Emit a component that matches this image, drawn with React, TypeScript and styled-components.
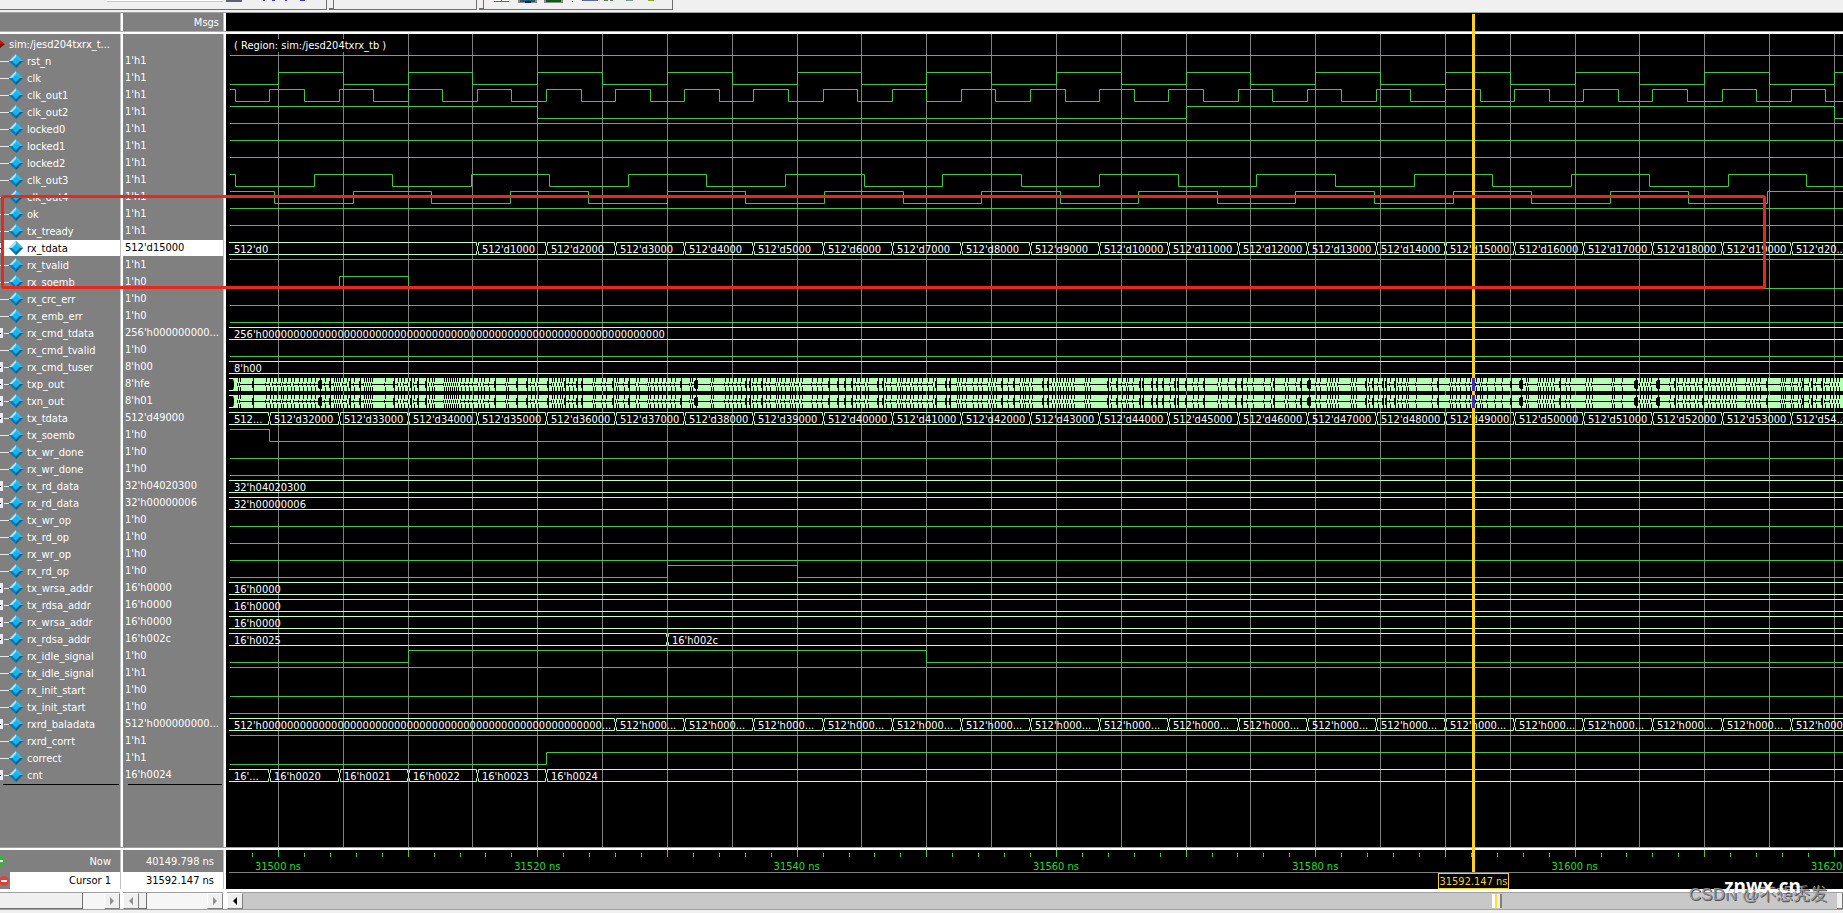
import React from "react";
import styled, { createGlobalStyle } from "styled-components";

const GlobalStyle = createGlobalStyle`
  * { box-sizing: border-box; }
  body { margin: 0; background: #f0f0f0; }
  body, button, text { font-family: "DejaVu Sans Condensed", Tahoma, "Noto Sans", sans-serif; font-size: 11px; }
`;

/* ---------- data ---------- */

const NS = 12966 / 1000; // horizontal pixels per nanosecond
const GRID = NS * 5;
const GRID_START = 52;
const BEAT = NS * (16 / 3);
const BEAT_START = 43.4;
const END = 2600;
const PITCH = 17;

type Wave =
  | { kind: "bit"; start: 0 | 1; edges?: number[] }
  | { kind: "bus"; values: string[]; edges?: number[] }
  | { kind: "dense" };

interface Signal { name: string; value: string; wave: Wave; selected?: boolean }

const high: Wave = { kind: "bit", start: 1 };
const low: Wave = { kind: "bit", start: 0 };
const bit = (start: 0 | 1, edges: number[]): Wave => ({ kind: "bit", start, edges });
const bus = (values: string[], edges: number[] = []): Wave => ({ kind: "bus", values, edges });
const every = (from: number, step: number) => {
  const out: number[] = [];
  for (let x = from; x < END; x += step) out.push(x);
  return out;
};
const beat = (n: number) => BEAT_START + n * BEAT;
const beats = (from: number, n: number) => Array.from({ length: n }, (_, i) => beat(from + i));
const count = (from: number, n: number) =>
  Array.from({ length: n }, (_, i) => `512'd${from + i * 1000}`);

const signals: Signal[] = [
  { name: "rst_n", value: "1'h1", wave: high },
  { name: "clk", value: "1'h1", wave: bit(0, every(GRID_START, GRID)) },
  { name: "clk_out1", value: "1'h1", wave: bit(1, every(BEAT_START - BEAT / 2, BEAT / 2)) },
  { name: "clk_out2", value: "1'h1", wave: bit(1, every(GRID_START + GRID * 4, GRID * 10)) },
  { name: "locked0", value: "1'h1", wave: high },
  { name: "locked1", value: "1'h1", wave: high },
  { name: "locked2", value: "1'h1", wave: high },
  { name: "clk_out3", value: "1'h1", wave: bit(1, every(9, 78.57)) },
  { name: "clk_out4", value: "1'h1", wave: bit(1, every(48, 78.57)) },
  { name: "ok", value: "1'h1", wave: high },
  { name: "tx_tready", value: "1'h1", wave: high },
  { name: "rx_tdata", value: "512'd15000", selected: true, wave: bus(["512'd0", ...count(1000, 19), "512'd20..."], beats(3, 20)) },
  { name: "rx_tvalid", value: "1'h1", wave: high },
  { name: "rx_soemb", value: "1'h0", wave: bit(0, [beat(1), beat(2)]) },
  { name: "rx_crc_err", value: "1'h0", wave: low },
  { name: "rx_emb_err", value: "1'h0", wave: low },
  { name: "rx_cmd_tdata", value: "256'h000000000...", wave: bus(["256'h" + "0".repeat(64)]) },
  { name: "rx_cmd_tvalid", value: "1'h0", wave: low },
  { name: "rx_cmd_tuser", value: "8'h00", wave: bus(["8'h00"]) },
  { name: "txp_out", value: "8'hfe", wave: { kind: "dense" } },
  { name: "txn_out", value: "8'h01", wave: { kind: "dense" } },
  { name: "tx_tdata", value: "512'd49000", wave: bus(["512...", ...count(32000, 22), "512'd54..."], beats(0, 23)) },
  { name: "tx_soemb", value: "1'h0", wave: bit(1, [beat(0)]) },
  { name: "tx_wr_done", value: "1'h0", wave: low },
  { name: "rx_wr_done", value: "1'h0", wave: low },
  { name: "tx_rd_data", value: "32'h04020300", wave: bus(["32'h04020300"]) },
  { name: "rx_rd_data", value: "32'h00000006", wave: bus(["32'h00000006"]) },
  { name: "tx_wr_op", value: "1'h0", wave: low },
  { name: "tx_rd_op", value: "1'h0", wave: low },
  { name: "rx_wr_op", value: "1'h0", wave: low },
  { name: "rx_rd_op", value: "1'h0", wave: bit(0, [GRID_START + GRID * 6, GRID_START + GRID * 8]) },
  { name: "tx_wrsa_addr", value: "16'h0000", wave: bus(["16'h0000"]) },
  { name: "tx_rdsa_addr", value: "16'h0000", wave: bus(["16'h0000"]) },
  { name: "rx_wrsa_addr", value: "16'h0000", wave: bus(["16'h0000"]) },
  { name: "rx_rdsa_addr", value: "16'h002c", wave: bus(["16'h0025", "16'h002c"], [GRID_START + GRID * 6]) },
  { name: "rx_idle_signal", value: "1'h0", wave: bit(0, [GRID_START + GRID * 2, GRID_START + GRID * 10]) },
  { name: "tx_idle_signal", value: "1'h1", wave: high },
  { name: "rx_init_start", value: "1'h0", wave: low },
  { name: "tx_init_start", value: "1'h0", wave: low },
  { name: "rxrd_baladata", value: "512'h000000000...", wave: bus(["512'h" + "0".repeat(54) + "...", ...Array(18).fill("512'h000...")], beats(5, 18)) },
  { name: "rxrd_corrt", value: "1'h1", wave: high },
  { name: "correct", value: "1'h1", wave: bit(0, [beat(4)]) },
  { name: "cnt", value: "16'h0024", wave: bus(["16'...", "16'h0020", "16'h0021", "16'h0022", "16'h0023", "16'h0024"], beats(0, 5)) },
];

/* Serial line transitions in thirds of a pixel: narrow, wide ("b") and very wide ("B"). */
const denseParts: [number, string][] = [
  [2, "30 36 75b 115 127 136 148 160 166 178 190 200 213 225 237 250 262 278B 292 308b 318 324 330 336 345 357 366b 380 398b 408 414 420 426 432 472 500b 510 520 530 541 550b 560 572b 595b 605 612 618 650 656 662 668 674 680 686 692 700 712 724 735 750 760 770 785 801b 835 840 868b 898b 910 922 930 962b 972 980 988 996 1004 1012b 1024 1036 1048b 1062b 1095 1101 1123 1135 1156b 1165 1172 1190 1204b 1225 1235 1260 1266 1280 1290 1302 1315 1330 1342 1360b 1388 1394 1406B 1450 1456 1492 1504 1516 1528 1540"],
  [514, "18b 30b 40 52 66b 80 92 108 114 125 135 150 158 166 178 186 218 232 248 268b 295b 315b 338b 350 360 375 385 415b 430b 438 455 472 480 488 498 510 520 535 548 565 580 590b 620b 632b 652 658 668 678 700 716 728 745 753 761 769 786b 805 822b 842 850 856 868 878 910b 925b 938 946 954 962 970 978 986 994 1002 1035 1042 1050 1105b 1115 1132b 1148 1158 1166 1180 1200b 1210b 1237b 1252b 1270b 1290 1305b 1315b 1340b 1360 1375 1392b 1435 1445 1465 1490b 1508b 1522"],
  [1024, "10 42 65 72b 106 116 138 154b 178B 200 210 232 240 248 256 266 305 311 318 348b 358 370b 385 400b 410b 422 436b 445 456 470 476 500 548 564b 602 608 618 632 650 662 680 690 698 712 735 758 785b 815B 830 836 865 872 880 888 896 904 912 930b 950 960 1008 1018 1028 1088 1094 1118 1158B 1172 1180 1188 1196 1204 1224B 1262 1275b 1285 1300 1310 1320 1335 1345 1360b 1375 1383 1400 1410 1420 1430 1440 1450 1460 1490 1500 1510 1520 1530 1552b"],
  [1157, "1195 1201 1207 1225 1232 1245 1255 1262b 1280 1288b 1300 1318b 1328 1342 1352 1360 1370"],
];
const denseEdges = denseParts
  .flatMap(([base, list]) => list.split(" ").map((t) => ({
    x: base + Math.floor(parseInt(t, 10) / 3),
    size: t.endsWith("B") ? 2 : t.endsWith("b") ? 1 : 0,
  })))
  .sort((a, b) => a.x - b.x);

/* ---------- page parts ---------- */

const Page = styled.div`
  display: flex;
  flex-direction: column;
  min-height: 100vh;
  position: relative;
  overflow: hidden;
`;

const ToolbarRow = styled.div`
  display: flex;
  height: 13px;
  background: #f0f0f0;
  border-bottom: 1px solid #a0a0a0;
`;

const ToolGroup = styled.div<{ $width: number; $grip?: boolean }>`
  display: flex;
  justify-content: flex-end;
  gap: 8px;
  position: relative;
  width: ${(p) => p.$width}px;
  height: 10px;
  margin-right: 2px;
  border-right: 1px solid #6e6e6e;
  border-bottom: 1px solid #6e6e6e;
  ${(p) => p.$grip && `
    justify-content: flex-start;
    &::before {
      content: "";
      width: 4px;
      height: 8px;
      border-right: 1px solid #6e6e6e;
      border-bottom: 1px solid #6e6e6e;
    }
  `}
`;

const SearchField = styled.input`
  width: 116px;
  height: 2px;
  margin-right: -5px;
  padding: 0;
  border: 0;
  border-bottom: 1px solid #c8c8c8;
  background: #fff;
`;

const DarkButton = styled.button`
  width: 16px;
  height: 2px;
  padding: 0;
  border: 0;
  background: #606070;
`;

const ToolIcons = styled.svg`
  display: block;
  width: 182px;
  height: 4px;
`;

const Workspace = styled.div`
  display: flex;
  flex: 1;
  min-height: 0;
`;

const SignalPane = styled.div`
  display: flex;
  flex-direction: column;
  flex: none;
  width: 226px;
  color: #fff;
`;

const SignalTable = styled.table`
  display: flex;
  flex-direction: column;
  flex: 1;
  background: linear-gradient(to right,
    #808080 120px, #c0c0c0 120px 121px, #fff 121px 123px,
    #808080 123px 223px, #c0c0c0 223px 224px, #fff 224px);
`;

const HeadGroup = styled.thead`
  display: block;
  height: 21px;
  border-bottom: 2px solid #fff;
  box-shadow: inset 0 -1px #b0b0b0;
`;

const BodyGroup = styled.tbody`
  display: block;
  flex: 1;
  padding-top: 2px;
`;

const FootGroup = styled.tfoot`
  display: block;
  height: 44px;
  border-top: 2px solid #fff;
  border-bottom: 3px solid #fff;
  box-shadow: 0 -1px #a0a0a0;
`;

const Row = styled.tr<{ $height?: number }>`
  display: grid;
  grid-template-columns: 120px 100px;
  column-gap: 3px;
  height: ${(p) => p.$height ?? PITCH}px;
`;

const NameCell = styled.th<{ $selected?: boolean }>`
  display: flex;
  align-items: center;
  height: ${PITCH - 1}px;
  padding: 0;
  font-weight: 400;
  white-space: nowrap;
  ${(p) => p.$selected && "background: linear-gradient(to right, #808080 4px, #fff 4px); color: #000;"}
`;

const ValueCell = styled.td<{ $selected?: boolean }>`
  height: ${PITCH - 1}px;
  padding: 0 0 0 2px;
  line-height: 15px;
  white-space: nowrap;
  overflow: hidden;
  ${(p) => p.$selected && "background: #fff; color: #000;"}
`;

const HeaderCell = styled.th`
  padding: 0 4px 0 0;
  font-weight: 400;
  line-height: 20px;
  text-align: right;
`;

const EndRule = styled.div`
  display: grid;
  grid-template-columns: 116px 94px;
  column-gap: 9px;
  height: 1px;
  margin-top: -3px;
  background: none;
  span { background: #000; }
`;

const TreeSlot = styled.span`
  display: flex;
  align-items: center;
  flex: none;
  width: 27px;
`;

const FootLabel = styled.th<{ $light?: boolean }>`
  display: flex;
  align-items: center;
  justify-content: space-between;
  padding: 0 9px 0 0;
  font-weight: 400;
  ${(p) => p.$light && "background: linear-gradient(to right, #808080 10px, #fff 10px); color: #000;"}
`;

const FootValue = styled.td<{ $light?: boolean }>`
  display: flex;
  align-items: center;
  justify-content: flex-end;
  padding: 0 9px 0 0;
  ${(p) => p.$light && "background: #fff; color: #000;"}
`;

const IconButton = styled.button`
  display: block;
  width: 10px;
  height: 14px;
  padding: 0;
  border: 0;
  background: none;
  svg { display: block; }
`;

const ExpandButton = styled.button`
  width: 3px;
  height: 10px;
  padding: 0;
  border: 0;
  background: linear-gradient(to right, #222 1px, transparent 1px) 0 5px / 3px 1px no-repeat, #ececf8;
`;

const Branch = styled.span<{ $short?: boolean }>`
  width: ${(p) => (p.$short ? 5 : 9)}px;
  margin-left: ${(p) => (p.$short ? 1 : 0)}px;
  height: 1px;
  background: #e8e8e8;
`;

const WavePane = styled.div`
  display: flex;
  flex-direction: column;
  flex: 1;
  min-width: 0;
  position: relative;
  background: #000;
`;

const WaveHeader = styled.div`
  height: 21px;
  border-bottom: 2px solid #fff;
  box-shadow: inset 0 -1px #b0b0b0;
`;

const WaveCanvas = styled.svg`
  display: block;
  flex: 1;
  width: 100%;
  min-height: 0;
  height: 0;
  text { white-space: pre; }
`;

const RulerBox = styled.div`
  height: 44px;
  border-top: 2px solid #fff;
  border-bottom: 3px solid #fff;
  box-shadow: 0 -1px #a0a0a0;
`;

const Ruler = styled.svg`
  display: block;
  width: 100%;
  height: 39px;
`;

const CursorLine = styled.div`
  position: absolute;
  left: 1246px;
  top: 1px;
  bottom: 20px;
  width: 3px;
  background: #ffd21e;
`;

const CursorTag = styled.div`
  position: absolute;
  left: 1212px;
  bottom: 3px;
  width: 71px;
  height: 16px;
  border: 1px solid #f0d030;
  background: #000;
  color: #f0d030;
  line-height: 15px;
  text-align: center;
  white-space: nowrap;
`;

const ScrollRow = styled.div`
  display: grid;
  grid-template-columns: 120px 100px 1fr;
  column-gap: 3px;
  height: 21px;
  padding-bottom: 4px;
  background: linear-gradient(#fff 17px, #a0a0a0 17px 18px, #f0f0f0 18px);
`;

const ScrollTrack = styled.div<{ $solid?: boolean }>`
  display: flex;
  min-width: 0;
  border-top: 1px solid #a0a0a0;
  margin-left: ${(p) => (p.$solid ? 1 : 0)}px;
  background: ${(p) => (p.$solid ? "#c8c8c8" : "#f6f6f6")};
`;

const Thumb = styled.div<{ $width: number }>`
  width: ${(p) => p.$width}px;
  border-right: 1px solid #707070;
  border-bottom: 1px solid #707070;
  background: #f0f0f0;
`;

const MarkThumb = styled.div`
  width: 10px;
  margin: 1px auto 1px 1249px;
  border-right: 2px solid #808080;
  background: linear-gradient(to right, #fff 3px, #ffe030 3px 5px, #f0f0f0 5px);
`;

const Spacer = styled.div`
  flex: 1;
`;

const ArrowButton = styled.button`
  flex: none;
  width: 16px;
  padding: 0;
  border: 1px solid #fff;
  border-right-color: #808080;
  border-bottom-color: #808080;
  background: #f0f0f0;
  svg { display: block; margin: auto; }
`;

const Highlight = styled.div`
  position: absolute;
  left: 1px;
  top: 195px;
  width: 1765px;
  height: 94px;
  border: 3px solid #e8281e;
  border-radius: 3px;
  pointer-events: none;
`;

const Watermark = styled.div`
  position: absolute;
  right: 16px;
  bottom: 6px;
  color: rgba(150, 150, 150, 0.95);
  font: 17px/24px "Liberation Sans", "Noto Sans CJK SC", sans-serif;
  text-shadow: 1px 1px #555;
  white-space: nowrap;
`;

const SiteMark = styled.div`
  position: absolute;
  right: 42px;
  bottom: 15px;
  color: #fff;
  font: 700 19px/24px "Open Sans", sans-serif;
`;

/* ---------- drawings ---------- */

const Diamond = () => (
  <svg width="14" height="14" viewBox="0 0 14 14" aria-hidden="true">
    <path d="M7 0 14 7 7 14 0 7Z" fill="#0b9ad6" />
    <path d="M7 0 7 4 4 7 0 7Z" fill="#a8e6fa" />
    <path d="M7 0 14 7 10 7 7 4Z" fill="#36b8ea" />
    <path d="M14 7 7 14 7 10 10 7Z" fill="#0a5f8c" />
    <path d="M0 7 4 7 7 10 7 14Z" fill="#0878ac" />
    <path d="M7 3 11 7 7 11 3 7Z" fill="#12b4f2" />
  </svg>
);

const RegionMark = () => (
  <svg width="9" height="10" viewBox="0 0 9 10" aria-hidden="true">
    <path d="M0 1 5 5 0 9Z" fill="#d01010" />
    <path d="M0 5 5 5 0 9Z" fill="#8c0808" />
  </svg>
);

const Arrow = ({ right, color = "#909090" }: { right?: boolean; color?: string }) => (
  <svg width="6" height="8" viewBox="0 0 6 8" aria-hidden="true">
    <path d={right ? "M1 0 5 4 1 8Z" : "M5 0 1 4 5 8Z"} fill={color} />
  </svg>
);

const top = (row: number) => 21 + row * PITCH;

function BitWave({ row, start, edges = [] }: { row: number; start: 0 | 1; edges?: number[] }) {
  const level = (v: number) => top(row) + (v ? 0 : 12) + 0.5;
  let v: number = start;
  let d = `M4 ${level(v)}`;
  for (const e of edges) {
    const x = Math.round(e) + 0.5;
    d += `H${x}`;
    v = 1 - v;
    d += `V${level(v)}`;
  }
  return <path d={`${d}H${END}`} fill="none" stroke="#45c445" />;
}

function BusWave({ row, values, edges = [] }: { row: number; values: string[]; edges?: number[] }) {
  const y = top(row) + 0.5;
  const points = [0, ...edges.map((e) => Math.round(e)), END];
  return (
    <g>
      {values.map((text, i) => {
        const a = i === 0 ? 3 : points[i] + 1.5;
        const b = i + 1 < values.length ? points[i + 1] - 0.5 : END;
        const left = i === 0 ? `M${a} ${y}` : `M${a} ${y + 12}V${y + 9}L${a - 1} ${y + 8}V${y + 4}L${a} ${y + 3}V${y}`;
        const right = b === END ? `H${b}` : `H${b}V${y + 3}L${b + 1} ${y + 4}V${y + 8}L${b} ${y + 9}V${y + 12}`;
        return (
          <g key={i}>
            <path d={`${left}${right}${b === END ? `M${a} ${y + 12}H${b}` : `H${a}`}`} fill="none" stroke="#c4ffc4" />
            <text x={i === 0 ? 8 : points[i] + 5} y={y + 10} fill="#fff">{text}</text>
          </g>
        );
      })}
    </g>
  );
}

function DenseWave({ row }: { row: number }) {
  const y = top(row);
  return (
    <g>
      <rect x="5" y={y} width={END} height="13" fill="#b4ffb4" />
      <rect x="3" y={y} width="3" height="1" fill="#fff" />
      <rect x="3" y={y + 12} width="3" height="1" fill="#fff" />
      <path d={`M3 ${y + 1}H7L8 ${y + 4}V${y + 9}L7 ${y + 12}H3Z`} />
      {denseEdges.map(({ x, size }, i) => {
        const next = denseEdges[i + 1]?.x ?? x;
        return (
          <g key={i}>
            <rect x={x} y={y} width="1" height="4" />
            <rect x={x} y={y + 9} width="1" height="4" />
            {size === 0 && <rect x={x - 1} y={y + 5} width="1" height="3" />}
            {size > 0 && <rect x={x - size} y={y + 3} width={size * 2} height="7" />}
            {size > 0 && <rect x={x - size + 1} y={y + 2} width={size * 2 - 1} height="9" />}
            {next - x > 3 && <rect x={x} y={y + 6} width={next - x} height="1" />}
          </g>
        );
      })}
    </g>
  );
}

const CursorCrossing = styled.div<{ $row: number }>`
  position: absolute;
  left: 1246px;
  top: ${(p) => 21 + top(p.$row)}px;
  width: 3px;
  height: 13px;
  background: #4a2cb0;
`;

const gridLines = every(GRID_START, GRID).map((x) => Math.round(x));

function Waves() {
  return (
    <WaveCanvas role="img" aria-label="Signal waveforms">
      {gridLines.map((x) => <rect key={x} x={x} y="0" width="1" height="100%" fill="#808080" />)}
      <rect x="4" y="5" width="156" height="13" />
      <text x="8" y="15" fill="#fff">( Region: sim:/jesd204txrx_tb )</text>
      {signals.map(({ name, wave }, row) => {
        if (wave.kind === "bit") return <BitWave key={name} row={row} start={wave.start} edges={wave.edges} />;
        if (wave.kind === "bus") return <BusWave key={name} row={row} values={wave.values} edges={wave.edges} />;
        return <DenseWave key={name} row={row} />;
      })}
    </WaveCanvas>
  );
}

function TimeRuler() {
  const ticks = every(GRID_START - NS * 2, NS * 2);
  return (
    <Ruler role="img" aria-label="Time ruler">
      {ticks.map((x, i) => (
        <rect key={i} x={Math.round(x)} y={i % 5 === 1 ? 0 : 3} width="1" height={i % 5 === 1 ? 7 : 4} fill="#45c445" />
      ))}
      {[0, 1, 2, 3, 4, 5, 6].map((i) => (
        <text key={i} x={GRID_START + i * 20 * NS} y="20" textAnchor="middle" fill="#22dd33">{`${31500 + i * 20} ns`}</text>
      ))}
      <rect x="3" y="22" width="100%" height="1" fill="#808080" />
    </Ruler>
  );
}

export default function App() {
  return (
    <Page>
      <GlobalStyle />
      <ToolbarRow>
        <ToolGroup $width={327}>
          <SearchField aria-label="Search" />
          <DarkButton aria-label="Search options" />
          <svg width="76" height="4" aria-hidden="true">
            <path d="M13 0h2v1h-2zM22 0h3v1h-3zM35 0h2v1h-2zM50 0h5v1h-5z" fill="#3a3ac8" />
          </svg>
        </ToolGroup>
        <ToolGroup $width={148} $grip />
        <ToolGroup $width={194} $grip>
          <ToolIcons aria-hidden="true">
            <path d="M0 0h17v2h-17z" fill="#fff" />
            <path d="M2 1h15v1h-15zM9 0h1v2h-1z" fill="#1d8a5a" />
            <path d="M26 0h19v3h-19zM52 0h19v3h-19z" fill="#8a8a8a" />
            <path d="M28 0h15v2h-15z" fill="#1f5f6f" />
            <path d="M33 1h6v2h-6z" fill="#181878" />
            <path d="M54 0h15v2h-15z" fill="#0a5a10" />
            <path d="M80 1h1v1h-1z" />
            <path d="M90 0h16v1h-16z" fill="#5a6a9a" />
            <path d="M112 0h4v1h-4zM118 0h3v1h-3z" fill="#5a7a5a" />
            <path d="M134 0h7v1h-7z" fill="#7a9a8a" />
            <path d="M156 0h6v1h-6z" fill="#8aa83a" />
          </ToolIcons>
        </ToolGroup>
      </ToolbarRow>

      <Workspace>
        <SignalPane>
          <SignalTable>
            <HeadGroup>
              <Row $height={19}>
                <HeaderCell aria-label="Signal" />
                <HeaderCell>Msgs</HeaderCell>
              </Row>
            </HeadGroup>
            <BodyGroup>
              <Row>
                <NameCell><RegionMark />sim:/jesd204txrx_t...</NameCell>
              </Row>
              {signals.map(({ name, value, wave, selected }) => (
                <Row key={name}>
                  <NameCell scope="row" $selected={selected}>
                    <TreeSlot>
                      {wave.kind === "bit" ? <Branch /> : (
                        <>
                          <ExpandButton aria-label={`Expand ${name}`} />
                          <Branch $short />
                        </>
                      )}
                      <Diamond />
                    </TreeSlot>
                    {name}
                  </NameCell>
                  <ValueCell $selected={selected}>{value}</ValueCell>
                </Row>
              ))}
              <tr><td><EndRule><span /><span /></EndRule></td></tr>
            </BodyGroup>
            <FootGroup>
              <Row $height={22}>
                <FootLabel scope="row">
                  <IconButton aria-label="Add cursor">
                    <svg width="6" height="14" aria-hidden="true">
                      <circle cx="-1" cy="7" r="6" fill="#3fae3f" />
                      <path d="M0 6h3v2h-3z" fill="#fff" />
                    </svg>
                  </IconButton>
                  Now
                </FootLabel>
                <FootValue>40149.798 ns</FootValue>
              </Row>
              <Row $height={17}>
                <FootLabel scope="row" $light>
                  <IconButton aria-label="Remove cursor">
                    <svg width="10" height="14" aria-hidden="true">
                      <circle cx="4" cy="7" r="5" fill="#e0403a" />
                      <path d="M1 6h6v2h-6z" fill="#fff" />
                    </svg>
                  </IconButton>
                  Cursor 1
                </FootLabel>
                <FootValue $light>31592.147 ns</FootValue>
              </Row>
            </FootGroup>
          </SignalTable>
        </SignalPane>

        <WavePane>
          <WaveHeader />
          <Waves />
          <RulerBox><TimeRuler /></RulerBox>
          <CursorLine />
          {signals.map(({ name, wave }, row) => wave.kind === "dense" && <CursorCrossing key={name} $row={row} />)}
          <CursorTag>31592.147 ns</CursorTag>
        </WavePane>
      </Workspace>

      <ScrollRow>
        <ScrollTrack>
          <Thumb $width={83} />
          <Spacer />
          <ArrowButton aria-label="Scroll names right"><Arrow right /></ArrowButton>
        </ScrollTrack>
        <ScrollTrack>
          <ArrowButton aria-label="Scroll values left"><Arrow /></ArrowButton>
          <Thumb $width={8} />
          <Spacer />
          <ArrowButton aria-label="Scroll values right"><Arrow right /></ArrowButton>
        </ScrollTrack>
        <ScrollTrack $solid>
          <ArrowButton aria-label="Scroll waves left"><Arrow color="#000" /></ArrowButton>
          <MarkThumb />
          <Thumb $width={6} />
        </ScrollTrack>
      </ScrollRow>

      <Highlight />
      <Watermark>CSDN @不想秃发</Watermark>
      <SiteMark>znwx.cn</SiteMark>
    </Page>
  );
}
